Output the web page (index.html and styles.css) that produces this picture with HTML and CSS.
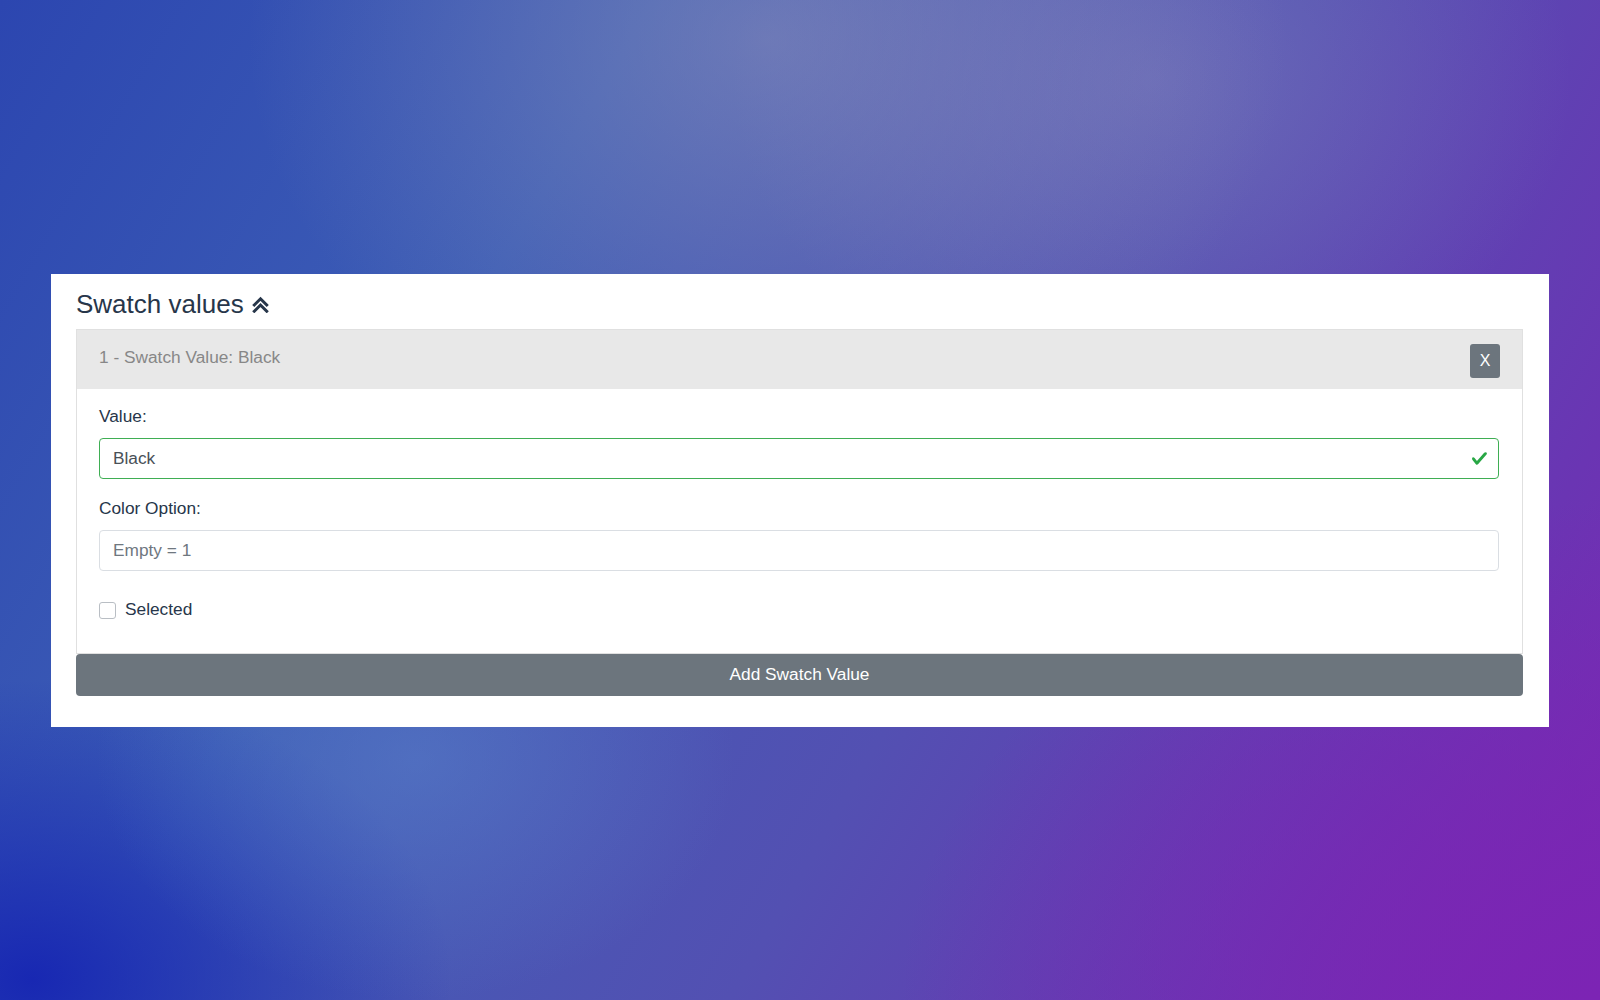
FILE: index.html
```html
<!DOCTYPE html>
<html lang="en">
<head>
<meta charset="utf-8">
<title>Swatch values</title>
<link rel="stylesheet" href="styles.css">
</head>
<body>
<div class="card">
  <h3 class="title">Swatch values <svg class="chev" width="17" height="17" viewBox="0 0 17 17" aria-hidden="true"><polyline points="2.3,9 8.5,2.8 14.7,9" /><polyline points="2.3,15.2 8.5,9 14.7,15.2" /></svg></h3>
  <div class="swatch">
    <div class="swatch-head">
      <span class="swatch-name">1 - Swatch Value: Black</span>
      <button class="btn-x" type="button">X</button>
    </div>
    <div class="swatch-body">
      <div class="group">
        <label class="lbl" for="val">Value:</label>
        <div class="field">
          <input id="val" class="input valid" type="text" value="Black">
          <svg class="ok" width="17" height="17" viewBox="0 0 8 8" aria-hidden="true"><path d="M2.3 6.73L.6 4.53c-.4-1.04.46-1.4 1.1-.8l1.1 1.4 3.4-3.8c.6-.63 1.6-.27 1.2.7l-4 4.6c-.43.5-.8.4-1.1.1z"/></svg>
        </div>
      </div>
      <div class="group">
        <label class="lbl" for="col">Color Option:</label>
        <input id="col" class="input" type="text" placeholder="Empty = 1">
      </div>
      <div class="check">
        <span class="box"></span>
        <span class="check-text">Selected</span>
      </div>
    </div>
  </div>
  <button class="btn-add" type="button">Add Swatch Value</button>
</div>
</body>
</html>
```
FILE: styles.css
```css
html, body {
  margin: 0;
  padding: 0;
  height: 100%;
}
body {
  font-family: "Liberation Sans", Arial, sans-serif;
  font-size: 17.3px;
  color: #27364a;
  display: flex;
  align-items: center;
  justify-content: center;
  min-height: 100vh;
  background:
    radial-gradient(ellipse 520px 420px at 48% 4%, rgba(150, 150, 185, 0.5), rgba(150, 150, 185, 0) 100%),
    radial-gradient(ellipse 420px 330px at 72% 8%, rgba(140, 140, 190, 0.42), rgba(140, 140, 190, 0) 100%),
    radial-gradient(ellipse 320px 240px at 26% 76%, rgba(95, 135, 205, 0.45), rgba(95, 135, 205, 0) 100%),
    radial-gradient(ellipse 420px 300px at 2% 98%, rgba(20, 34, 178, 0.9), rgba(20, 34, 178, 0) 100%),
    radial-gradient(ellipse 700px 500px at 100% 100%, rgba(124, 36, 180, 1), rgba(124, 36, 180, 0) 100%),
    linear-gradient(120deg, #2c46b0 0%, #3d5eb6 30%, #5350b2 60%, #6a35b3 85%, #7a28b4 100%);
}
.card {
  box-sizing: border-box;
  width: 1498px;
  background: #ffffff;
  padding: 15px 26px 31px 25px;
}
.title {
  margin: 0 0 10px 0;
  font-size: 26px;
  font-weight: 400;
  line-height: 30px;
  color: #27364a;
}
.chev {
  margin-left: 1px;
  fill: none;
  stroke: #27364a;
  stroke-width: 3;
  stroke-linecap: square;
  stroke-linejoin: miter;
}
.swatch {
  border: 1px solid #e0e0e0;
}
.swatch-head {
  display: flex;
  justify-content: space-between;
  align-items: flex-start;
  background: #e8e8e8;
  padding: 14px 22px 11px 22px;
}
.swatch-name {
  color: #878787;
  line-height: 26px;
}
.btn-x {
  box-sizing: border-box;
  width: 30px;
  height: 34px;
  border: none;
  border-radius: 3px;
  background: #6c757d;
  color: #ffffff;
  font-family: "Liberation Sans", Arial, sans-serif;
  font-size: 16px;
  padding: 0;
}
.swatch-body {
  padding: 15px 23px 31px 22px;
}
.group {
  display: flex;
  flex-direction: column;
  margin-bottom: 17px;
}
.lbl {
  line-height: 25px;
  margin-bottom: 9px;
  color: #27364a;
}
.field {
  position: relative;
}
.input {
  box-sizing: border-box;
  width: 100%;
  height: 41px;
  border: 1px solid #dadee3;
  border-radius: 4px;
  padding: 0 13px;
  font-family: "Liberation Sans", Arial, sans-serif;
  font-size: 17.3px;
  color: #495057;
  background: #ffffff;
  outline: none;
}
.input::placeholder {
  color: #6f777f;
  opacity: 1;
}
.input.valid {
  border-color: #3fae54;
  padding-right: 40px;
}
.ok {
  position: absolute;
  right: 11px;
  top: 12px;
  fill: #28a745;
}
.check {
  display: flex;
  align-items: center;
  margin-top: 26px;
  line-height: 25px;
}
.box {
  box-sizing: border-box;
  width: 17px;
  height: 17px;
  border: 1px solid #b9bec4;
  border-radius: 3px;
  margin-top: 3px;
  margin-right: 9px;
  background: #ffffff;
}
.check-text {
  color: #27364a;
}
.btn-add {
  display: block;
  width: 100%;
  height: 42px;
  border: none;
  border-radius: 4px;
  background: #6c757d;
  color: #ffffff;
  font-family: "Liberation Sans", Arial, sans-serif;
  font-size: 17.3px;
  padding: 0;
}
```
